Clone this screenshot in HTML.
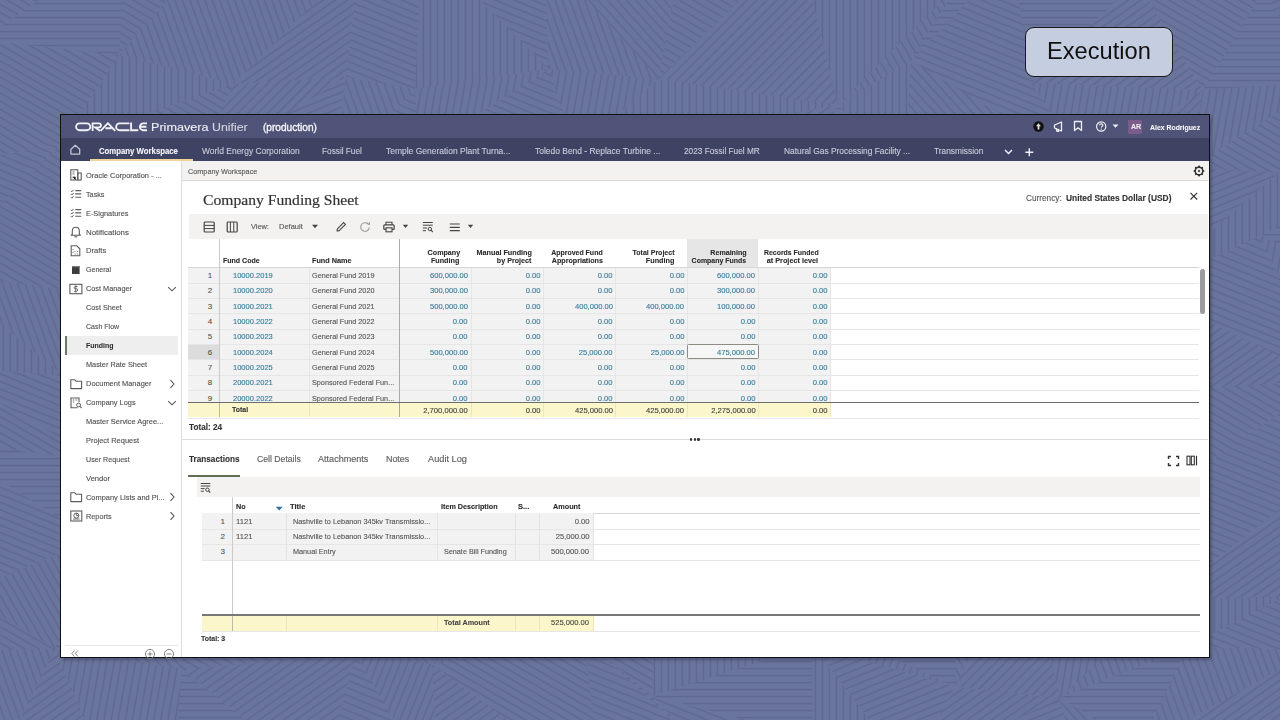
<!DOCTYPE html>
<html><head><meta charset="utf-8"><title>Company Funding Sheet</title>
<style>
html,body{margin:0;padding:0;width:1280px;height:720px;overflow:hidden;background:#5f6991;}
.a{position:absolute;display:block;}
.t{position:absolute;white-space:nowrap;font-family:"Liberation Sans",sans-serif;-webkit-text-stroke:0.12px currentColor;}
#root{position:relative;width:1280px;height:720px;overflow:hidden;}
</style></head><body><div id="root">
<div class="a" style="left:0px;top:0px;width:1280px;height:720px;background:#68729a;"></div>
<svg class="a" style="left:0;top:0" width="1280" height="720"><defs><pattern id="bp0" patternUnits="userSpaceOnUse" width="7" height="7" patternTransform="rotate(0)"><rect width="7" height="7" fill="#6b759d"/><rect x="0" y="2.8" width="7" height="1.6" fill="#5e6891"/></pattern><pattern id="bp1" patternUnits="userSpaceOnUse" width="7" height="7" patternTransform="rotate(22)"><rect width="7" height="7" fill="#6b759d"/><rect x="0" y="2.8" width="7" height="1.6" fill="#5e6891"/></pattern><pattern id="bp2" patternUnits="userSpaceOnUse" width="7" height="7" patternTransform="rotate(48)"><rect width="7" height="7" fill="#6b759d"/><rect x="0" y="2.8" width="7" height="1.6" fill="#5e6891"/></pattern><pattern id="bp3" patternUnits="userSpaceOnUse" width="7" height="7" patternTransform="rotate(70)"><rect width="7" height="7" fill="#6b759d"/><rect x="0" y="2.8" width="7" height="1.6" fill="#5e6891"/></pattern><pattern id="bp4" patternUnits="userSpaceOnUse" width="7" height="7" patternTransform="rotate(90)"><rect width="7" height="7" fill="#6b759d"/><rect x="0" y="2.8" width="7" height="1.6" fill="#5e6891"/></pattern><pattern id="bp5" patternUnits="userSpaceOnUse" width="7" height="7" patternTransform="rotate(112)"><rect width="7" height="7" fill="#6b759d"/><rect x="0" y="2.8" width="7" height="1.6" fill="#5e6891"/></pattern><pattern id="bp6" patternUnits="userSpaceOnUse" width="7" height="7" patternTransform="rotate(135)"><rect width="7" height="7" fill="#6b759d"/><rect x="0" y="2.8" width="7" height="1.6" fill="#5e6891"/></pattern><pattern id="bp7" patternUnits="userSpaceOnUse" width="7" height="7" patternTransform="rotate(158)"><rect width="7" height="7" fill="#6b759d"/><rect x="0" y="2.8" width="7" height="1.6" fill="#5e6891"/></pattern><pattern id="bp8" patternUnits="userSpaceOnUse" width="7" height="7" patternTransform="rotate(30)"><rect width="7" height="7" fill="#6b759d"/><rect x="0" y="2.8" width="7" height="1.6" fill="#5e6891"/></pattern><pattern id="bp9" patternUnits="userSpaceOnUse" width="7" height="7" patternTransform="rotate(60)"><rect width="7" height="7" fill="#6b759d"/><rect x="0" y="2.8" width="7" height="1.6" fill="#5e6891"/></pattern><pattern id="bp10" patternUnits="userSpaceOnUse" width="7" height="7" patternTransform="rotate(100)"><rect width="7" height="7" fill="#6b759d"/><rect x="0" y="2.8" width="7" height="1.6" fill="#5e6891"/></pattern><pattern id="bp11" patternUnits="userSpaceOnUse" width="7" height="7" patternTransform="rotate(145)"><rect width="7" height="7" fill="#6b759d"/><rect x="0" y="2.8" width="7" height="1.6" fill="#5e6891"/></pattern><filter id="bgb" x="0" y="0" width="1" height="1"><feGaussianBlur stdDeviation="0.45"/></filter></defs><g filter="url(#bgb)"><polygon points="-44,-54 128,-62 -18,40" fill="url(#bp8)"/><polygon points="128,-62 119,55 -18,40" fill="url(#bp0)"/><polygon points="-18,40 119,55 62,143" fill="url(#bp8)"/><polygon points="-18,40 62,143 -27,161" fill="url(#bp8)"/><polygon points="-27,161 62,143 -65,271" fill="url(#bp1)"/><polygon points="62,143 75,292 -65,271" fill="url(#bp8)"/><polygon points="-65,271 75,292 64,376" fill="url(#bp3)"/><polygon points="-65,271 64,376 -67,365" fill="url(#bp4)"/><polygon points="-67,365 64,376 101,461" fill="url(#bp1)"/><polygon points="-67,365 101,461 -64,441" fill="url(#bp8)"/><polygon points="-64,441 101,461 94,539" fill="url(#bp0)"/><polygon points="-64,441 94,539 -36,593" fill="url(#bp1)"/><polygon points="-36,593 94,539 55,649" fill="url(#bp9)"/><polygon points="-36,593 55,649 -60,651" fill="url(#bp8)"/><polygon points="-60,651 55,649 -20,801" fill="url(#bp3)"/><polygon points="55,649 104,765 -20,801" fill="url(#bp11)"/><polygon points="-20,801 104,765 75,876" fill="url(#bp8)"/><polygon points="-20,801 75,876 -24,863" fill="url(#bp8)"/><polygon points="128,-62 206,-44 119,55" fill="url(#bp8)"/><polygon points="206,-44 234,84 119,55" fill="url(#bp3)"/><polygon points="119,55 234,84 62,143" fill="url(#bp4)"/><polygon points="234,84 190,175 62,143" fill="url(#bp8)"/><polygon points="62,143 190,175 75,292" fill="url(#bp3)"/><polygon points="190,175 212,296 75,292" fill="url(#bp7)"/><polygon points="75,292 212,296 228,355" fill="url(#bp1)"/><polygon points="75,292 228,355 64,376" fill="url(#bp6)"/><polygon points="64,376 228,355 248,443" fill="url(#bp1)"/><polygon points="64,376 248,443 101,461" fill="url(#bp10)"/><polygon points="101,461 248,443 203,588" fill="url(#bp1)"/><polygon points="101,461 203,588 94,539" fill="url(#bp3)"/><polygon points="94,539 203,588 55,649" fill="url(#bp1)"/><polygon points="203,588 182,669 55,649" fill="url(#bp2)"/><polygon points="55,649 182,669 104,765" fill="url(#bp10)"/><polygon points="182,669 173,782 104,765" fill="url(#bp10)"/><polygon points="104,765 173,782 231,875" fill="url(#bp4)"/><polygon points="104,765 231,875 75,876" fill="url(#bp2)"/><polygon points="206,-44 360,-43 234,84" fill="url(#bp3)"/><polygon points="360,-43 346,77 234,84" fill="url(#bp11)"/><polygon points="234,84 346,77 190,175" fill="url(#bp6)"/><polygon points="346,77 336,167 190,175" fill="url(#bp7)"/><polygon points="190,175 336,167 357,301" fill="url(#bp10)"/><polygon points="190,175 357,301 212,296" fill="url(#bp3)"/><polygon points="212,296 357,301 328,381" fill="url(#bp6)"/><polygon points="212,296 328,381 228,355" fill="url(#bp8)"/><polygon points="228,355 328,381 295,484" fill="url(#bp6)"/><polygon points="228,355 295,484 248,443" fill="url(#bp3)"/><polygon points="248,443 295,484 342,605" fill="url(#bp1)"/><polygon points="248,443 342,605 203,588" fill="url(#bp11)"/><polygon points="203,588 342,605 356,655" fill="url(#bp5)"/><polygon points="203,588 356,655 182,669" fill="url(#bp8)"/><polygon points="182,669 356,655 321,782" fill="url(#bp11)"/><polygon points="182,669 321,782 173,782" fill="url(#bp0)"/><polygon points="173,782 321,782 292,867" fill="url(#bp8)"/><polygon points="173,782 292,867 231,875" fill="url(#bp9)"/><polygon points="360,-43 423,-57 415,89" fill="url(#bp1)"/><polygon points="360,-43 415,89 346,77" fill="url(#bp1)"/><polygon points="346,77 415,89 336,167" fill="url(#bp3)"/><polygon points="415,89 420,152 336,167" fill="url(#bp1)"/><polygon points="336,167 420,152 441,296" fill="url(#bp4)"/><polygon points="336,167 441,296 357,301" fill="url(#bp0)"/><polygon points="357,301 441,296 328,381" fill="url(#bp2)"/><polygon points="441,296 416,366 328,381" fill="url(#bp4)"/><polygon points="328,381 416,366 295,484" fill="url(#bp6)"/><polygon points="416,366 454,497 295,484" fill="url(#bp10)"/><polygon points="295,484 454,497 342,605" fill="url(#bp4)"/><polygon points="454,497 476,595 342,605" fill="url(#bp6)"/><polygon points="342,605 476,595 432,664" fill="url(#bp8)"/><polygon points="342,605 432,664 356,655" fill="url(#bp9)"/><polygon points="356,655 432,664 439,797" fill="url(#bp5)"/><polygon points="356,655 439,797 321,782" fill="url(#bp1)"/><polygon points="321,782 439,797 487,846" fill="url(#bp11)"/><polygon points="321,782 487,846 292,867" fill="url(#bp2)"/><polygon points="423,-57 544,-49 549,69" fill="url(#bp1)"/><polygon points="423,-57 549,69 415,89" fill="url(#bp4)"/><polygon points="415,89 549,69 420,152" fill="url(#bp10)"/><polygon points="549,69 577,153 420,152" fill="url(#bp1)"/><polygon points="420,152 577,153 441,296" fill="url(#bp1)"/><polygon points="577,153 530,264 441,296" fill="url(#bp9)"/><polygon points="441,296 530,264 416,366" fill="url(#bp1)"/><polygon points="530,264 560,375 416,366" fill="url(#bp4)"/><polygon points="416,366 560,375 454,497" fill="url(#bp7)"/><polygon points="560,375 606,483 454,497" fill="url(#bp0)"/><polygon points="454,497 606,483 571,578" fill="url(#bp8)"/><polygon points="454,497 571,578 476,595" fill="url(#bp6)"/><polygon points="476,595 571,578 432,664" fill="url(#bp4)"/><polygon points="571,578 584,639 432,664" fill="url(#bp9)"/><polygon points="432,664 584,639 602,790" fill="url(#bp8)"/><polygon points="432,664 602,790 439,797" fill="url(#bp11)"/><polygon points="439,797 602,790 600,891" fill="url(#bp1)"/><polygon points="439,797 600,891 487,846" fill="url(#bp2)"/><polygon points="544,-49 681,-37 658,79" fill="url(#bp2)"/><polygon points="544,-49 658,79 549,69" fill="url(#bp3)"/><polygon points="549,69 658,79 577,153" fill="url(#bp10)"/><polygon points="658,79 655,140 577,153" fill="url(#bp4)"/><polygon points="577,153 655,140 530,264" fill="url(#bp3)"/><polygon points="655,140 667,246 530,264" fill="url(#bp4)"/><polygon points="530,264 667,246 677,339" fill="url(#bp10)"/><polygon points="530,264 677,339 560,375" fill="url(#bp2)"/><polygon points="560,375 677,339 650,446" fill="url(#bp0)"/><polygon points="560,375 650,446 606,483" fill="url(#bp4)"/><polygon points="606,483 650,446 658,560" fill="url(#bp0)"/><polygon points="606,483 658,560 571,578" fill="url(#bp11)"/><polygon points="571,578 658,560 584,639" fill="url(#bp3)"/><polygon points="658,560 652,696 584,639" fill="url(#bp8)"/><polygon points="584,639 652,696 699,745" fill="url(#bp7)"/><polygon points="584,639 699,745 602,790" fill="url(#bp1)"/><polygon points="602,790 699,745 600,891" fill="url(#bp10)"/><polygon points="699,745 670,859 600,891" fill="url(#bp6)"/><polygon points="681,-37 799,-56 658,79" fill="url(#bp8)"/><polygon points="799,-56 838,105 658,79" fill="url(#bp6)"/><polygon points="658,79 838,105 655,140" fill="url(#bp4)"/><polygon points="838,105 807,169 655,140" fill="url(#bp11)"/><polygon points="655,140 807,169 777,242" fill="url(#bp3)"/><polygon points="655,140 777,242 667,246" fill="url(#bp5)"/><polygon points="667,246 777,242 797,354" fill="url(#bp11)"/><polygon points="667,246 797,354 677,339" fill="url(#bp11)"/><polygon points="677,339 797,354 650,446" fill="url(#bp6)"/><polygon points="797,354 836,446 650,446" fill="url(#bp5)"/><polygon points="650,446 836,446 658,560" fill="url(#bp2)"/><polygon points="836,446 772,602 658,560" fill="url(#bp0)"/><polygon points="658,560 772,602 812,645" fill="url(#bp11)"/><polygon points="658,560 812,645 652,696" fill="url(#bp4)"/><polygon points="652,696 812,645 813,737" fill="url(#bp0)"/><polygon points="652,696 813,737 699,745" fill="url(#bp1)"/><polygon points="699,745 813,737 670,859" fill="url(#bp6)"/><polygon points="813,737 812,903 670,859" fill="url(#bp8)"/><polygon points="799,-56 959,-16 838,105" fill="url(#bp4)"/><polygon points="959,-16 911,61 838,105" fill="url(#bp9)"/><polygon points="838,105 911,61 903,189" fill="url(#bp4)"/><polygon points="838,105 903,189 807,169" fill="url(#bp0)"/><polygon points="807,169 903,189 933,290" fill="url(#bp2)"/><polygon points="807,169 933,290 777,242" fill="url(#bp4)"/><polygon points="777,242 933,290 916,351" fill="url(#bp4)"/><polygon points="777,242 916,351 797,354" fill="url(#bp5)"/><polygon points="797,354 916,351 836,446" fill="url(#bp8)"/><polygon points="916,351 955,504 836,446" fill="url(#bp5)"/><polygon points="836,446 955,504 958,591" fill="url(#bp4)"/><polygon points="836,446 958,591 772,602" fill="url(#bp3)"/><polygon points="772,602 958,591 955,687" fill="url(#bp0)"/><polygon points="772,602 955,687 812,645" fill="url(#bp5)"/><polygon points="812,645 955,687 908,771" fill="url(#bp7)"/><polygon points="812,645 908,771 813,737" fill="url(#bp4)"/><polygon points="813,737 908,771 812,903" fill="url(#bp3)"/><polygon points="908,771 918,837 812,903" fill="url(#bp3)"/><polygon points="959,-16 1012,-45 911,61" fill="url(#bp0)"/><polygon points="1012,-45 1031,83 911,61" fill="url(#bp1)"/><polygon points="911,61 1031,83 1087,166" fill="url(#bp1)"/><polygon points="911,61 1087,166 903,189" fill="url(#bp2)"/><polygon points="903,189 1087,166 1085,304" fill="url(#bp0)"/><polygon points="903,189 1085,304 933,290" fill="url(#bp6)"/><polygon points="933,290 1085,304 1086,361" fill="url(#bp4)"/><polygon points="933,290 1086,361 916,351" fill="url(#bp10)"/><polygon points="916,351 1086,361 1028,451" fill="url(#bp9)"/><polygon points="916,351 1028,451 955,504" fill="url(#bp8)"/><polygon points="955,504 1028,451 958,591" fill="url(#bp2)"/><polygon points="1028,451 1026,549 958,591" fill="url(#bp10)"/><polygon points="958,591 1026,549 955,687" fill="url(#bp9)"/><polygon points="1026,549 1060,698 955,687" fill="url(#bp6)"/><polygon points="955,687 1060,698 908,771" fill="url(#bp11)"/><polygon points="1060,698 1077,769 908,771" fill="url(#bp7)"/><polygon points="908,771 1077,769 1062,891" fill="url(#bp11)"/><polygon points="908,771 1062,891 918,837" fill="url(#bp9)"/><polygon points="1012,-45 1137,-19 1031,83" fill="url(#bp0)"/><polygon points="1137,-19 1203,90 1031,83" fill="url(#bp11)"/><polygon points="1031,83 1203,90 1087,166" fill="url(#bp10)"/><polygon points="1203,90 1190,168 1087,166" fill="url(#bp6)"/><polygon points="1087,166 1190,168 1085,304" fill="url(#bp8)"/><polygon points="1190,168 1144,290 1085,304" fill="url(#bp2)"/><polygon points="1085,304 1144,290 1086,361" fill="url(#bp8)"/><polygon points="1144,290 1157,391 1086,361" fill="url(#bp9)"/><polygon points="1086,361 1157,391 1028,451" fill="url(#bp0)"/><polygon points="1157,391 1208,463 1028,451" fill="url(#bp10)"/><polygon points="1028,451 1208,463 1026,549" fill="url(#bp11)"/><polygon points="1208,463 1162,601 1026,549" fill="url(#bp10)"/><polygon points="1026,549 1162,601 1060,698" fill="url(#bp10)"/><polygon points="1162,601 1188,647 1060,698" fill="url(#bp3)"/><polygon points="1060,698 1188,647 1140,746" fill="url(#bp0)"/><polygon points="1060,698 1140,746 1077,769" fill="url(#bp2)"/><polygon points="1077,769 1140,746 1062,891" fill="url(#bp1)"/><polygon points="1140,746 1202,891 1062,891" fill="url(#bp6)"/><polygon points="1137,-19 1262,-7 1203,90" fill="url(#bp8)"/><polygon points="1262,-7 1328,81 1203,90" fill="url(#bp0)"/><polygon points="1203,90 1328,81 1190,168" fill="url(#bp10)"/><polygon points="1328,81 1278,173 1190,168" fill="url(#bp8)"/><polygon points="1190,168 1278,173 1144,290" fill="url(#bp7)"/><polygon points="1278,173 1260,236 1144,290" fill="url(#bp4)"/><polygon points="1144,290 1260,236 1328,380" fill="url(#bp1)"/><polygon points="1144,290 1328,380 1157,391" fill="url(#bp11)"/><polygon points="1157,391 1328,380 1208,463" fill="url(#bp8)"/><polygon points="1328,380 1292,500 1208,463" fill="url(#bp1)"/><polygon points="1208,463 1292,500 1162,601" fill="url(#bp1)"/><polygon points="1292,500 1285,596 1162,601" fill="url(#bp11)"/><polygon points="1162,601 1285,596 1188,647" fill="url(#bp4)"/><polygon points="1285,596 1316,650 1188,647" fill="url(#bp1)"/><polygon points="1188,647 1316,650 1140,746" fill="url(#bp3)"/><polygon points="1316,650 1270,756 1140,746" fill="url(#bp11)"/><polygon points="1140,746 1270,756 1202,891" fill="url(#bp3)"/><polygon points="1270,756 1269,876 1202,891" fill="url(#bp11)"/><polygon points="1262,-7 1391,-36 1328,81" fill="url(#bp7)"/><polygon points="1391,-36 1380,99 1328,81" fill="url(#bp7)"/><polygon points="1328,81 1380,99 1278,173" fill="url(#bp1)"/><polygon points="1380,99 1398,167 1278,173" fill="url(#bp7)"/><polygon points="1278,173 1398,167 1260,236" fill="url(#bp4)"/><polygon points="1398,167 1417,298 1260,236" fill="url(#bp0)"/><polygon points="1260,236 1417,298 1328,380" fill="url(#bp10)"/><polygon points="1417,298 1404,399 1328,380" fill="url(#bp3)"/><polygon points="1328,380 1404,399 1410,472" fill="url(#bp2)"/><polygon points="1328,380 1410,472 1292,500" fill="url(#bp5)"/><polygon points="1292,500 1410,472 1412,536" fill="url(#bp11)"/><polygon points="1292,500 1412,536 1285,596" fill="url(#bp11)"/><polygon points="1285,596 1412,536 1405,648" fill="url(#bp9)"/><polygon points="1285,596 1405,648 1316,650" fill="url(#bp2)"/><polygon points="1316,650 1405,648 1370,791" fill="url(#bp0)"/><polygon points="1316,650 1370,791 1270,756" fill="url(#bp7)"/><polygon points="1270,756 1370,791 1384,868" fill="url(#bp10)"/><polygon points="1270,756 1384,868 1269,876" fill="url(#bp1)"/></g></svg>
<div class="a" style="left:1025px;top:27.2px;width:148px;height:49.5px;background:#c5cde0;border:1.5px solid #1a1a1a;border-radius:9px;box-sizing:border-box;"></div>
<div class="t" id="exec" style="top:39.61px;font-size:23.5px;line-height:23.5px;color:#111;font-weight:400;font-family:'Liberation Sans', sans-serif;left:1047px;transform-origin:0 50%;transform:scaleX(1.0058);-webkit-text-stroke:0;">Execution</div>
<div class="a" style="left:60px;top:114px;width:1150px;height:544px;background:#111;box-shadow:1.5px 2px 3px rgba(20,25,50,0.35);"></div>
<div class="a" style="left:61px;top:115px;width:1148px;height:542px;background:#ffffff;"></div>
<div class="a" style="left:61px;top:115px;width:1148px;height:23px;background:#4f5478;"></div>
<div class="a" style="left:61px;top:138px;width:1148px;height:23px;background:#3e4364;"></div>
<svg class="a" style="left:75px;top:122px;" width="74" height="10" viewBox="0 0 74 10"><g fill="none" stroke="#f2f2f6" stroke-width="1.85"><rect x="1.1" y="1.3" width="14.2" height="6.9" rx="3.45"/><path d="M17.6 8.9 V1.3 H24 C26.6 1.3 26.6 5.3 24 5.3 H20.2 L25.2 8.9"/><path d="M25.6 8.9 L32.9 1.2 L40.2 8.9 M30.5 6.2 H36.5"/><path d="M54.4 1.3 H44.6 A3.45 3.45 0 0 0 44.6 8.2 H54.4"/><path d="M56.1 0.6 V8.2 H63.3"/><path d="M72 1.3 H68.3 A3.45 3.45 0 0 0 68.3 8.2 H72 M65.6 4.75 H71.4"/></g></svg>
<div class="t" id="prim" style="top:121.77px;font-size:11.02px;line-height:11.02px;color:#eceef4;font-weight:400;font-family:'Liberation Sans', sans-serif;left:150.9px;transform-origin:0 50%;transform:scaleX(1.1460);">Primavera</div>
<div class="t" id="unif" style="top:121.77px;font-size:11.02px;line-height:11.02px;color:#d0d3de;font-weight:400;font-family:'Liberation Sans', sans-serif;left:211.9px;transform-origin:0 50%;transform:scaleX(1.1219);">Unifier</div>
<div class="t" id="prod" style="top:122.88px;font-size:10.18px;line-height:10.18px;color:#f4f4f8;font-weight:400;font-family:'Liberation Sans', sans-serif;left:262.7px;transform-origin:0 50%;transform:scaleX(0.9926);-webkit-text-stroke:0.35px #f4f4f8;">(production)</div>
<svg class="a" style="left:1032px;top:120px;" width="13" height="13" viewBox="0 0 13 13"><circle cx="6.5" cy="6.5" r="5.2" fill="#111"/><path d="M6.5 3.3 L9 6.2 H7.4 V9.6 H5.6 V6.2 H4 Z" fill="#ddd"/></svg>
<svg class="a" style="left:1052px;top:120px;" width="14" height="13" viewBox="0 0 14 13"><path d="M2.5 5 L9.5 2 V11 L2.5 8 Z" fill="none" stroke="#f0f0f4" stroke-width="1.3" stroke-linejoin="round"/><path d="M4 8.3 L5 11.3 H6.6 L6 8.8" fill="none" stroke="#f0f0f4" stroke-width="1.2"/></svg>
<svg class="a" style="left:1072px;top:120px;" width="12" height="12" viewBox="0 0 12 12"><path d="M2.5 1.5 H9.5 V10.5 L6 7.8 L2.5 10.5 Z" fill="none" stroke="#f0f0f4" stroke-width="1.3" stroke-linejoin="round"/></svg>
<svg class="a" style="left:1095px;top:120px;" width="13" height="13" viewBox="0 0 13 13"><circle cx="6.2" cy="6.5" r="4.6" fill="none" stroke="#f0f0f4" stroke-width="1.2"/><path d="M4.6 5.3 C4.6 3.4 7.9 3.4 7.9 5.2 C7.9 6.3 6.3 6.4 6.3 7.6" fill="none" stroke="#f0f0f4" stroke-width="1.1"/><circle cx="6.3" cy="9.1" r="0.7" fill="#f0f0f4"/></svg>
<svg class="a" style="left:1111px;top:123px;" width="9" height="6" viewBox="0 0 9 6"><path d="M1.5 1.5 H7.5 L4.5 4.8 Z" fill="#f0f0f4"/></svg>
<div class="a" style="left:1127.8px;top:120.2px;width:14.5px;height:13.6px;background:#7a5d8b;border-radius:1px;"></div>
<div class="t" id="ar" style="top:124.24px;font-size:6.57px;line-height:6.57px;color:#eee8f0;font-weight:700;font-family:'Liberation Sans', sans-serif;left:1130.6px;transform-origin:0 50%;transform:scaleX(1.0667);">AR</div>
<div class="t" id="alex" style="top:123.68px;font-size:8.06px;line-height:8.06px;color:#f4f4f8;font-weight:700;font-family:'Liberation Sans', sans-serif;left:1149.8px;transform-origin:0 50%;transform:scaleX(0.8559);">Alex Rodriguez</div>
<svg class="a" style="left:69px;top:144px;" width="13" height="12" viewBox="0 0 13 12"><path d="M1.9 5.2 L6.3 1.3 L10.7 5.2 V10.1 H1.9 Z" fill="none" stroke="#c3c6d4" stroke-width="1.25" stroke-linejoin="round"/></svg>
<div class="t" id="nav0" style="top:146.60px;font-size:9.33px;line-height:9.33px;color:#f4f4f8;font-weight:700;font-family:'Liberation Sans', sans-serif;left:98.8px;transform-origin:0 50%;transform:scaleX(0.8337);">Company Workspace</div>
<div class="a" style="left:90.3px;top:159.3px;width:102.5px;height:2px;background:#f0d49a;"></div>
<div class="t" id="nav1" style="top:146.60px;font-size:9.33px;line-height:9.33px;color:#c9ccd9;font-weight:400;font-family:'Liberation Sans', sans-serif;left:201.6px;transform-origin:0 50%;transform:scaleX(0.9074);">World Energy Corporation</div>
<div class="t" id="nav2" style="top:146.60px;font-size:9.33px;line-height:9.33px;color:#c9ccd9;font-weight:400;font-family:'Liberation Sans', sans-serif;left:322.2px;transform-origin:0 50%;transform:scaleX(0.8844);">Fossil Fuel</div>
<div class="t" id="nav3" style="top:146.60px;font-size:9.33px;line-height:9.33px;color:#c9ccd9;font-weight:400;font-family:'Liberation Sans', sans-serif;left:386.0px;transform-origin:0 50%;transform:scaleX(0.9088);">Temple Generation Plant Turna...</div>
<div class="t" id="nav4" style="top:146.60px;font-size:9.33px;line-height:9.33px;color:#c9ccd9;font-weight:400;font-family:'Liberation Sans', sans-serif;left:535.0px;transform-origin:0 50%;transform:scaleX(0.9058);">Toledo Bend - Replace Turbine ...</div>
<div class="t" id="nav5" style="top:146.60px;font-size:9.33px;line-height:9.33px;color:#c9ccd9;font-weight:400;font-family:'Liberation Sans', sans-serif;left:684.4px;transform-origin:0 50%;transform:scaleX(0.8860);">2023 Fossil Fuel MR</div>
<div class="t" id="nav6" style="top:146.60px;font-size:9.33px;line-height:9.33px;color:#c9ccd9;font-weight:400;font-family:'Liberation Sans', sans-serif;left:783.5px;transform-origin:0 50%;transform:scaleX(0.8972);">Natural Gas Processing Facility ...</div>
<div class="t" id="nav7" style="top:146.60px;font-size:9.33px;line-height:9.33px;color:#c9ccd9;font-weight:400;font-family:'Liberation Sans', sans-serif;left:933.8px;transform-origin:0 50%;transform:scaleX(0.8945);">Transmission</div>
<svg class="a" style="left:1003px;top:148px;" width="11" height="8" viewBox="0 0 11 8"><path d="M2 2 L5.5 5.5 L9 2" fill="none" stroke="#eef0f6" stroke-width="1.5"/></svg>
<svg class="a" style="left:1024px;top:146.5px;" width="11" height="11" viewBox="0 0 11 11"><path d="M5.3 1.3 V9.3 M1.3 5.3 H9.3" stroke="#eef0f6" stroke-width="1.4"/></svg>
<div class="a" style="left:181.2px;top:161px;width:1px;height:495.5px;background:#dedede;"></div>
<div class="a" style="left:67.4px;top:336.3px;width:110.7px;height:18.5px;background:#eeeeee;"></div>
<div class="a" style="left:65.4px;top:336.3px;width:2px;height:18.5px;background:#6a7863;"></div>
<div class="t" id="side0" style="top:171.77px;font-size:7.95px;line-height:7.95px;color:#505050;font-weight:400;font-family:'Liberation Sans', sans-serif;left:86.3px;transform-origin:0 50%;transform:scaleX(0.9395);">Oracle Corporation - ...</div>
<svg class="a" style="left:69.8px;top:169.4px;" width="12" height="12" viewBox="0 0 12 12"><rect x="0.8" y="0.8" width="7" height="10.2" fill="none" stroke="#5c5c5c" stroke-width="1.1"/><rect x="7.8" y="4" width="3.4" height="7" fill="none" stroke="#5c5c5c" stroke-width="1.1"/><path d="M2.5 3 H4.5 M2.5 5 H4.5 M2.5 8 H5.5 V11" stroke="#5c5c5c" stroke-width="0.9"/></svg>
<div class="t" id="side1" style="top:190.70px;font-size:7.95px;line-height:7.95px;color:#505050;font-weight:400;font-family:'Liberation Sans', sans-serif;left:86.3px;transform-origin:0 50%;transform:scaleX(0.9100);">Tasks</div>
<svg class="a" style="left:69.8px;top:189.33px;" width="12" height="10" viewBox="0 0 12 10"><path d="M0.8 1.8 L1.8 2.8 L3.6 0.8 M0.8 5 L1.8 6 L3.6 4 M0.8 8.2 L1.8 9.2 L3.6 7.2" fill="none" stroke="#5c5c5c" stroke-width="1"/><path d="M5.3 1.6 H11.2 M5.3 4.9 H11.2 M5.3 8.2 H11.2" stroke="#5c5c5c" stroke-width="1.1"/></svg>
<div class="t" id="side2" style="top:209.63px;font-size:7.95px;line-height:7.95px;color:#505050;font-weight:400;font-family:'Liberation Sans', sans-serif;left:86.3px;transform-origin:0 50%;transform:scaleX(0.9261);">E-Signatures</div>
<svg class="a" style="left:69.8px;top:208.26000000000002px;" width="12" height="10" viewBox="0 0 12 10"><path d="M0.8 1.8 L1.8 2.8 L3.6 0.8 M0.8 5 L1.8 6 L3.6 4 M0.8 8.2 L1.8 9.2 L3.6 7.2" fill="none" stroke="#5c5c5c" stroke-width="1"/><path d="M5.3 1.6 H11.2 M5.3 4.9 H11.2 M5.3 8.2 H11.2" stroke="#5c5c5c" stroke-width="1.1"/></svg>
<div class="t" id="side3" style="top:228.56px;font-size:7.95px;line-height:7.95px;color:#505050;font-weight:400;font-family:'Liberation Sans', sans-serif;left:86.3px;transform-origin:0 50%;transform:scaleX(0.9930);">Notifications</div>
<svg class="a" style="left:69.8px;top:226.19px;" width="12" height="12" viewBox="0 0 12 12"><path d="M2.3 8.3 V5 C2.3 2.5 3.8 1.2 5.8 1.2 C7.8 1.2 9.3 2.5 9.3 5 V8.3 L10.4 9.2 H1.2 Z" fill="none" stroke="#5c5c5c" stroke-width="1.1" stroke-linejoin="round"/><path d="M4.3 10.8 H7.3" stroke="#5c5c5c" stroke-width="1.1"/></svg>
<div class="t" id="side4" style="top:247.49px;font-size:7.95px;line-height:7.95px;color:#505050;font-weight:400;font-family:'Liberation Sans', sans-serif;left:86.3px;transform-origin:0 50%;transform:scaleX(0.9524);">Drafts</div>
<svg class="a" style="left:69.8px;top:245.12px;" width="12" height="12" viewBox="0 0 12 12"><path d="M1.2 0.8 H6.8 L9.8 3.8 V10.8 H1.2 Z" fill="none" stroke="#5c5c5c" stroke-width="1.1"/><path d="M3 4 V5 M3 7 V8 M5 6 V7 M5 8.5 V9.5 M7.5 6 V7 M7.5 8.5 V9.5" stroke="#5c5c5c" stroke-width="0.8"/></svg>
<div class="t" id="side5" style="top:266.42px;font-size:7.95px;line-height:7.95px;color:#505050;font-weight:400;font-family:'Liberation Sans', sans-serif;left:86.3px;transform-origin:0 50%;transform:scaleX(0.8893);">General</div>
<svg class="a" style="left:69.8px;top:264.04999999999995px;" width="12" height="12" viewBox="0 0 12 12"><rect x="2" y="2" width="7.6" height="8" fill="#3c3c3c"/><rect x="2" y="2" width="7.6" height="1.3" fill="#777"/></svg>
<div class="t" id="side6" style="top:285.35px;font-size:7.95px;line-height:7.95px;color:#505050;font-weight:400;font-family:'Liberation Sans', sans-serif;left:86.3px;transform-origin:0 50%;transform:scaleX(0.9220);">Cost Manager</div>
<svg class="a" style="left:68.8px;top:282.97999999999996px;" width="14" height="12" viewBox="0 0 14 12"><rect x="0.9" y="1.3" width="12" height="9.4" fill="none" stroke="#5c5c5c" stroke-width="1.1"/><path d="M8.6 3.5 H6 C4.8 3.5 4.8 5.7 6 5.7 H7.6 C8.9 5.7 8.9 8.3 7.6 8.3 H5 M6.8 2.3 V9.6" fill="none" stroke="#5c5c5c" stroke-width="0.9"/></svg>
<svg class="a" style="left:167px;top:284.97999999999996px;" width="10" height="8" viewBox="0 0 10 8"><path d="M1.2 2.2 L5 5.8 L8.8 2.2" fill="none" stroke="#555" stroke-width="1.1"/></svg>
<div class="t" id="side7" style="top:304.28px;font-size:7.95px;line-height:7.95px;color:#505050;font-weight:400;font-family:'Liberation Sans', sans-serif;left:86.3px;transform-origin:0 50%;transform:scaleX(0.9128);">Cost Sheet</div>
<div class="t" id="side8" style="top:323.21px;font-size:7.95px;line-height:7.95px;color:#505050;font-weight:400;font-family:'Liberation Sans', sans-serif;left:86.3px;transform-origin:0 50%;transform:scaleX(0.8842);">Cash Flow</div>
<div class="t" id="side9" style="top:342.14px;font-size:7.95px;line-height:7.95px;color:#333;font-weight:700;font-family:'Liberation Sans', sans-serif;left:86.3px;transform-origin:0 50%;transform:scaleX(0.8774);">Funding</div>
<div class="t" id="side10" style="top:361.07px;font-size:7.95px;line-height:7.95px;color:#505050;font-weight:400;font-family:'Liberation Sans', sans-serif;left:86.3px;transform-origin:0 50%;transform:scaleX(0.9227);">Master Rate Sheet</div>
<div class="t" id="side11" style="top:380.00px;font-size:7.95px;line-height:7.95px;color:#505050;font-weight:400;font-family:'Liberation Sans', sans-serif;left:86.3px;transform-origin:0 50%;transform:scaleX(0.9386);">Document Manager</div>
<svg class="a" style="left:69.8px;top:377.63px;" width="13" height="12" viewBox="0 0 13 12"><path d="M0.8 1.8 H4.8 L6 3.2 H11.6 V10.6 H0.8 Z" fill="none" stroke="#5c5c5c" stroke-width="1.1" stroke-linejoin="round"/></svg>
<svg class="a" style="left:168px;top:378.63px;" width="8" height="10" viewBox="0 0 8 10"><path d="M2.5 1.2 L6 5 L2.5 8.8" fill="none" stroke="#555" stroke-width="1.1"/></svg>
<div class="t" id="side12" style="top:398.93px;font-size:7.95px;line-height:7.95px;color:#505050;font-weight:400;font-family:'Liberation Sans', sans-serif;left:86.3px;transform-origin:0 50%;transform:scaleX(0.9283);">Company Logs</div>
<svg class="a" style="left:69.8px;top:396.55999999999995px;" width="13" height="12" viewBox="0 0 13 12"><path d="M7.5 10.8 H1 V1 H9 V5" fill="none" stroke="#5c5c5c" stroke-width="1.1"/><path d="M2.8 3 H4.2 M2.8 5 H4.2 M5.5 3 H7.2" stroke="#5c5c5c" stroke-width="0.9"/><circle cx="8.6" cy="8" r="1.9" fill="none" stroke="#5c5c5c" stroke-width="1"/><path d="M10 9.4 L11.6 11" stroke="#5c5c5c" stroke-width="1.1"/></svg>
<svg class="a" style="left:167px;top:398.55999999999995px;" width="10" height="8" viewBox="0 0 10 8"><path d="M1.2 2.2 L5 5.8 L8.8 2.2" fill="none" stroke="#555" stroke-width="1.1"/></svg>
<div class="t" id="side13" style="top:417.86px;font-size:7.95px;line-height:7.95px;color:#505050;font-weight:400;font-family:'Liberation Sans', sans-serif;left:86.3px;transform-origin:0 50%;transform:scaleX(0.9373);">Master Service Agree...</div>
<div class="t" id="side14" style="top:436.79px;font-size:7.95px;line-height:7.95px;color:#505050;font-weight:400;font-family:'Liberation Sans', sans-serif;left:86.3px;transform-origin:0 50%;transform:scaleX(0.9375);">Project Request</div>
<div class="t" id="side15" style="top:455.72px;font-size:7.95px;line-height:7.95px;color:#505050;font-weight:400;font-family:'Liberation Sans', sans-serif;left:86.3px;transform-origin:0 50%;transform:scaleX(0.9000);">User Request</div>
<div class="t" id="side16" style="top:474.65px;font-size:7.95px;line-height:7.95px;color:#505050;font-weight:400;font-family:'Liberation Sans', sans-serif;left:86.3px;transform-origin:0 50%;transform:scaleX(0.9560);">Vendor</div>
<div class="t" id="side17" style="top:493.58px;font-size:7.95px;line-height:7.95px;color:#505050;font-weight:400;font-family:'Liberation Sans', sans-serif;left:86.3px;transform-origin:0 50%;transform:scaleX(0.9369);">Company Lists and Pi...</div>
<svg class="a" style="left:69.8px;top:491.21px;" width="13" height="12" viewBox="0 0 13 12"><path d="M0.8 1.8 H4.8 L6 3.2 H11.6 V10.6 H0.8 Z" fill="none" stroke="#5c5c5c" stroke-width="1.1" stroke-linejoin="round"/></svg>
<svg class="a" style="left:168px;top:492.21px;" width="8" height="10" viewBox="0 0 8 10"><path d="M2.5 1.2 L6 5 L2.5 8.8" fill="none" stroke="#555" stroke-width="1.1"/></svg>
<div class="t" id="side18" style="top:512.51px;font-size:7.95px;line-height:7.95px;color:#505050;font-weight:400;font-family:'Liberation Sans', sans-serif;left:86.3px;transform-origin:0 50%;transform:scaleX(0.9214);">Reports</div>
<svg class="a" style="left:69.8px;top:510.14px;" width="13" height="12" viewBox="0 0 13 12"><rect x="0.8" y="1" width="11" height="10" fill="none" stroke="#5c5c5c" stroke-width="1.1"/><circle cx="6.3" cy="5.6" r="2.5" fill="none" stroke="#5c5c5c" stroke-width="1"/><path d="M6.3 3.1 V5.6 H8.8" fill="none" stroke="#5c5c5c" stroke-width="0.9"/><path d="M3 9 H9.6" stroke="#5c5c5c" stroke-width="0.9"/></svg>
<svg class="a" style="left:168px;top:511.14px;" width="8" height="10" viewBox="0 0 8 10"><path d="M2.5 1.2 L6 5 L2.5 8.8" fill="none" stroke="#555" stroke-width="1.1"/></svg>
<div class="a" style="left:65px;top:645.3px;width:113px;height:1px;background:#e6e6e6;"></div>
<svg class="a" style="left:70px;top:649px;" width="10" height="9" viewBox="0 0 10 9"><path d="M4.5 1.5 L1.8 4.5 L4.5 7.5 M8 1.5 L5.3 4.5 L8 7.5" fill="none" stroke="#777" stroke-width="0.9"/></svg>
<svg class="a" style="left:144px;top:648px;" width="12" height="12" viewBox="0 0 12 12"><circle cx="6" cy="6" r="4.6" fill="none" stroke="#777" stroke-width="0.9"/><path d="M6 3.5 V8.5 M3.5 6 H8.5" stroke="#777" stroke-width="0.9"/></svg>
<svg class="a" style="left:163px;top:648px;" width="12" height="12" viewBox="0 0 12 12"><circle cx="6" cy="6" r="4.6" fill="none" stroke="#777" stroke-width="0.9"/><path d="M3.5 6 H8.5" stroke="#777" stroke-width="0.9"/></svg>
<div class="a" style="left:181.7px;top:161px;width:1027px;height:19.5px;background:#f3f2f0;"></div>
<div class="a" style="left:181.7px;top:180.3px;width:1026.8px;height:1px;background:#d9d9d9;"></div>
<div class="t" id="crumb" style="top:167.86px;font-size:7.84px;line-height:7.84px;color:#555;font-weight:400;font-family:'Liberation Sans', sans-serif;left:187.7px;transform-origin:0 50%;transform:scaleX(0.9280);">Company Workspace</div>
<svg class="a" style="left:1192px;top:164.1px;" width="14" height="14" viewBox="0 0 14 14"><circle cx="7" cy="7" r="3.8" fill="none" stroke="#333" stroke-width="1.45"/><circle cx="11.40" cy="7.00" r="1.05" fill="#333"/><circle cx="10.11" cy="10.11" r="1.05" fill="#333"/><circle cx="7.00" cy="11.40" r="1.05" fill="#333"/><circle cx="3.89" cy="10.11" r="1.05" fill="#333"/><circle cx="2.60" cy="7.00" r="1.05" fill="#333"/><circle cx="3.89" cy="3.89" r="1.05" fill="#333"/><circle cx="7.00" cy="2.60" r="1.05" fill="#333"/><circle cx="10.11" cy="3.89" r="1.05" fill="#333"/><circle cx="7" cy="7" r="1.2" fill="#555"/></svg>
<div class="t" id="title" style="top:191.84px;font-size:15.6px;line-height:15.6px;color:#333;font-weight:400;font-family:'Liberation Serif', serif;left:203.0px;transform-origin:0 50%;transform:scaleX(1.0032);-webkit-text-stroke:0.2px #333;">Company Funding Sheet</div>
<div class="t" id="cur0" style="top:194.05px;font-size:8.8px;line-height:8.8px;color:#555;font-weight:400;font-family:'Liberation Sans', sans-serif;left:1026px;transform-origin:0 50%;transform:scaleX(0.9368);">Currency:</div>
<div class="t" id="cur1" style="top:194.05px;font-size:8.8px;line-height:8.8px;color:#333;font-weight:700;font-family:'Liberation Sans', sans-serif;left:1066px;transform-origin:0 50%;transform:scaleX(0.9545);">United States Dollar (USD)</div>
<svg class="a" style="left:1189px;top:191px;" width="10" height="10" viewBox="0 0 10 10"><path d="M1.5 1.8 L8.2 8.5 M8.2 1.8 L1.5 8.5" stroke="#333" stroke-width="1.1"/></svg>
<div class="a" style="left:188.6px;top:213.8px;width:1019px;height:25px;background:#f3f2f0;"></div>
<svg class="a" style="left:203px;top:220.5px;" width="13" height="12" viewBox="0 0 13 12"><rect x="1.2" y="1" width="10" height="10" rx="1" fill="none" stroke="#444" stroke-width="1.2"/><path d="M1.2 4.4 H11.2 M1.2 7.6 H11.2" stroke="#444" stroke-width="1"/></svg>
<svg class="a" style="left:226px;top:220.5px;" width="13" height="12" viewBox="0 0 13 12"><rect x="1.2" y="1" width="10" height="10" rx="1" fill="none" stroke="#444" stroke-width="1.2"/><path d="M4.4 1 V11 M7.8 1 V11" stroke="#444" stroke-width="1"/></svg>
<div class="t" id="view" style="top:223.06px;font-size:7.84px;line-height:7.84px;color:#555;font-weight:400;font-family:'Liberation Sans', sans-serif;left:251.3px;transform-origin:0 50%;transform:scaleX(0.9421);">View:</div>
<div class="t" id="default" style="top:223.06px;font-size:7.84px;line-height:7.84px;color:#555;font-weight:400;font-family:'Liberation Sans', sans-serif;left:279px;transform-origin:0 50%;transform:scaleX(0.9600);">Default</div>
<svg class="a" style="left:311px;top:224px;" width="8" height="5" viewBox="0 0 8 5"><path d="M1 0.8 H7 L4 4.2 Z" fill="#444"/></svg>
<svg class="a" style="left:334.5px;top:221px;" width="13" height="12" viewBox="0 0 13 12"><path d="M2 10 L2.4 7.8 L8.6 1.6 L10.4 3.4 L4.2 9.6 Z" fill="none" stroke="#444" stroke-width="1.1" stroke-linejoin="round"/></svg>
<svg class="a" style="left:358.5px;top:221px;" width="12" height="12" viewBox="0 0 12 12"><path d="M9.6 3.6 A4.3 4.3 0 1 0 10.3 6.4" fill="none" stroke="#9a9a9a" stroke-width="1.1"/><path d="M8 1.6 L10.2 3.8 L10.6 1" fill="none" stroke="#9a9a9a" stroke-width="1"/></svg>
<svg class="a" style="left:383px;top:221px;" width="12" height="12" viewBox="0 0 12 12"><path d="M3 3.8 V1.2 H9 V3.8" fill="none" stroke="#444" stroke-width="1.1"/><rect x="0.8" y="3.8" width="10.4" height="4.6" rx="1" fill="none" stroke="#444" stroke-width="1.2"/><rect x="3" y="6.8" width="6" height="4" fill="#f1f0ee" stroke="#444" stroke-width="1.1"/></svg>
<svg class="a" style="left:401.5px;top:224px;" width="7" height="5" viewBox="0 0 7 5"><path d="M0.8 0.8 H6.2 L3.5 4 Z" fill="#444"/></svg>
<svg class="a" style="left:421.5px;top:221px;" width="12" height="12" viewBox="0 0 12 12"><path d="M0.8 1.5 H10.8 M0.8 4.2 H10.8 M0.8 7 H5 M0.8 9.7 H4" stroke="#444" stroke-width="1"/><circle cx="7.8" cy="8" r="1.7" fill="none" stroke="#444" stroke-width="1"/><path d="M9 9.2 L10.8 11" stroke="#444" stroke-width="1.1"/></svg>
<svg class="a" style="left:448.5px;top:221.5px;" width="12" height="11" viewBox="0 0 12 11"><path d="M0.8 2 H10.8 M0.8 5.3 H10.8 M0.8 8.6 H10.8" stroke="#444" stroke-width="1.2"/></svg>
<svg class="a" style="left:466.5px;top:224px;" width="7" height="5" viewBox="0 0 7 5"><path d="M0.8 0.8 H6.2 L3.5 4 Z" fill="#444"/></svg>
<div class="a" style="left:687.2px;top:239.3px;width:71.3px;height:28.2px;background:#e6e6e6;"></div>
<div class="a" style="left:188.4px;top:267.0px;width:1010.6px;height:1px;background:#d6d6d6;"></div>
<div class="a" style="left:188.4px;top:267.5px;width:642.4px;height:138.32999999999998px;background:#f2f2f2;"></div>
<div class="a" style="left:188.4px;top:344.35px;width:30.599999999999994px;height:15.37px;background:#dcdcdc;"></div>
<div class="a" style="left:188.4px;top:283px;width:1010.6px;height:1px;background:#e6e6e6;"></div>
<div class="a" style="left:188.4px;top:298px;width:1010.6px;height:1px;background:#e6e6e6;"></div>
<div class="a" style="left:188.4px;top:313px;width:1010.6px;height:1px;background:#e6e6e6;"></div>
<div class="a" style="left:188.4px;top:329px;width:1010.6px;height:1px;background:#e6e6e6;"></div>
<div class="a" style="left:188.4px;top:344px;width:1010.6px;height:1px;background:#e6e6e6;"></div>
<div class="a" style="left:188.4px;top:359px;width:1010.6px;height:1px;background:#e6e6e6;"></div>
<div class="a" style="left:188.4px;top:375px;width:1010.6px;height:1px;background:#e6e6e6;"></div>
<div class="a" style="left:188.4px;top:390px;width:1010.6px;height:1px;background:#e6e6e6;"></div>
<div class="a" style="left:308.8px;top:267.5px;width:1px;height:134.10000000000002px;background:#e6e6e6;"></div>
<div class="a" style="left:470.5px;top:267.5px;width:1px;height:134.10000000000002px;background:#e6e6e6;"></div>
<div class="a" style="left:543.3px;top:267.5px;width:1px;height:134.10000000000002px;background:#e6e6e6;"></div>
<div class="a" style="left:615.3px;top:267.5px;width:1px;height:134.10000000000002px;background:#e6e6e6;"></div>
<div class="a" style="left:686.7px;top:267.5px;width:1px;height:134.10000000000002px;background:#e6e6e6;"></div>
<div class="a" style="left:758.0px;top:267.5px;width:1px;height:134.10000000000002px;background:#e6e6e6;"></div>
<div class="a" style="left:830.3px;top:267.5px;width:1px;height:134.10000000000002px;background:#e6e6e6;"></div>
<div class="a" style="left:687.2px;top:344.2px;width:71.5px;height:15.1px;box-sizing:border-box;border:1px solid #8c8c84;border-radius:1.5px;background:#f6f6f6;"></div>
<div class="t" id="h_fc" style="top:256.77px;font-size:7.95px;line-height:7.95px;color:#2b2b2b;font-weight:700;font-family:'Liberation Sans', sans-serif;left:222.5px;transform-origin:0 50%;transform:scaleX(0.8841);">Fund Code</div>
<div class="t" id="h_fn" style="top:256.77px;font-size:7.95px;line-height:7.95px;color:#2b2b2b;font-weight:700;font-family:'Liberation Sans', sans-serif;left:312px;transform-origin:0 50%;transform:scaleX(0.9128);">Fund Name</div>
<div class="t" id="h0a" style="top:248.67px;font-size:7.95px;line-height:7.95px;color:#2b2b2b;font-weight:700;font-family:'Liberation Sans', sans-serif;right:820.3px;transform-origin:100% 50%;transform:scaleX(0.9000);">Company</div>
<div class="t" id="h0b" style="top:257.07px;font-size:7.95px;line-height:7.95px;color:#2b2b2b;font-weight:700;font-family:'Liberation Sans', sans-serif;right:820.3px;transform-origin:100% 50%;transform:scaleX(0.9065);">Funding</div>
<div class="t" id="h1a" style="top:248.67px;font-size:7.95px;line-height:7.95px;color:#2b2b2b;font-weight:700;font-family:'Liberation Sans', sans-serif;right:748.6px;transform-origin:100% 50%;transform:scaleX(0.9082);">Manual Funding</div>
<div class="t" id="h1b" style="top:257.07px;font-size:7.95px;line-height:7.95px;color:#2b2b2b;font-weight:700;font-family:'Liberation Sans', sans-serif;right:748.6px;transform-origin:100% 50%;transform:scaleX(0.9000);">by Project</div>
<div class="t" id="h2a" style="top:248.67px;font-size:7.95px;line-height:7.95px;color:#2b2b2b;font-weight:700;font-family:'Liberation Sans', sans-serif;right:677.1px;transform-origin:100% 50%;transform:scaleX(0.8780);">Approved Fund</div>
<div class="t" id="h2b" style="top:257.07px;font-size:7.95px;line-height:7.95px;color:#2b2b2b;font-weight:700;font-family:'Liberation Sans', sans-serif;right:677.1px;transform-origin:100% 50%;transform:scaleX(0.8982);">Appropriations</div>
<div class="t" id="h3a" style="top:248.67px;font-size:7.95px;line-height:7.95px;color:#2b2b2b;font-weight:700;font-family:'Liberation Sans', sans-serif;right:605.3px;transform-origin:100% 50%;transform:scaleX(0.8833);">Total Project</div>
<div class="t" id="h3b" style="top:257.07px;font-size:7.95px;line-height:7.95px;color:#2b2b2b;font-weight:700;font-family:'Liberation Sans', sans-serif;right:605.3px;transform-origin:100% 50%;transform:scaleX(0.9097);">Funding</div>
<div class="t" id="h4a" style="top:248.67px;font-size:7.95px;line-height:7.95px;color:#2b2b2b;font-weight:700;font-family:'Liberation Sans', sans-serif;right:533.7px;transform-origin:100% 50%;transform:scaleX(0.8927);">Remaining</div>
<div class="t" id="h4b" style="top:257.07px;font-size:7.95px;line-height:7.95px;color:#2b2b2b;font-weight:700;font-family:'Liberation Sans', sans-serif;right:533.7px;transform-origin:100% 50%;transform:scaleX(0.8774);">Company Funds</div>
<div class="t" id="h5a" style="top:248.67px;font-size:7.95px;line-height:7.95px;color:#2b2b2b;font-weight:700;font-family:'Liberation Sans', sans-serif;right:461.79999999999995px;transform-origin:100% 50%;transform:scaleX(0.8730);">Records Funded</div>
<div class="t" id="h5b" style="top:257.07px;font-size:7.95px;line-height:7.95px;color:#2b2b2b;font-weight:700;font-family:'Liberation Sans', sans-serif;right:461.79999999999995px;transform-origin:100% 50%;transform:scaleX(0.9143);">at Project level</div>
<div class="t" id="rn0" style="top:271.83px;font-size:8.0px;line-height:8.0px;color:#555;font-weight:400;font-family:'Liberation Sans', sans-serif;right:1067.7px;transform-origin:100% 50%;">1</div>
<div class="t" id="code0" style="top:271.83px;font-size:8.0px;line-height:8.0px;color:#367b9a;font-weight:400;font-family:'Liberation Sans', sans-serif;left:232.5px;transform-origin:0 50%;transform:scaleX(0.9405);">10000.2019</div>
<div class="t" id="name0" style="top:271.83px;font-size:8.0px;line-height:8.0px;color:#555;font-weight:400;font-family:'Liberation Sans', sans-serif;left:312.0px;transform-origin:0 50%;transform:scaleX(0.9058);">General Fund 2019</div>
<div class="t" id="v0_0" style="top:271.83px;font-size:8.0px;line-height:8.0px;color:#367b9a;font-weight:400;font-family:'Liberation Sans', sans-serif;right:812.0px;transform-origin:100% 50%;transform:scaleX(0.9525);">600,000.00</div>
<div class="t" id="v0_1" style="top:271.83px;font-size:8.0px;line-height:8.0px;color:#367b9a;font-weight:400;font-family:'Liberation Sans', sans-serif;right:739.2px;transform-origin:100% 50%;transform:scaleX(0.9525);">0.00</div>
<div class="t" id="v0_2" style="top:271.83px;font-size:8.0px;line-height:8.0px;color:#367b9a;font-weight:400;font-family:'Liberation Sans', sans-serif;right:667.2px;transform-origin:100% 50%;transform:scaleX(0.9525);">0.00</div>
<div class="t" id="v0_3" style="top:271.83px;font-size:8.0px;line-height:8.0px;color:#367b9a;font-weight:400;font-family:'Liberation Sans', sans-serif;right:595.8px;transform-origin:100% 50%;transform:scaleX(0.9525);">0.00</div>
<div class="t" id="v0_4" style="top:271.83px;font-size:8.0px;line-height:8.0px;color:#367b9a;font-weight:400;font-family:'Liberation Sans', sans-serif;right:524.5px;transform-origin:100% 50%;transform:scaleX(0.9525);">600,000.00</div>
<div class="t" id="v0_5" style="top:271.83px;font-size:8.0px;line-height:8.0px;color:#367b9a;font-weight:400;font-family:'Liberation Sans', sans-serif;right:452.20000000000005px;transform-origin:100% 50%;transform:scaleX(0.9525);">0.00</div>
<div class="t" id="rn1" style="top:287.20px;font-size:8.0px;line-height:8.0px;color:#555;font-weight:400;font-family:'Liberation Sans', sans-serif;right:1067.7px;transform-origin:100% 50%;">2</div>
<div class="t" id="code1" style="top:287.20px;font-size:8.0px;line-height:8.0px;color:#367b9a;font-weight:400;font-family:'Liberation Sans', sans-serif;left:232.5px;transform-origin:0 50%;transform:scaleX(0.9405);">10000.2020</div>
<div class="t" id="name1" style="top:287.20px;font-size:8.0px;line-height:8.0px;color:#555;font-weight:400;font-family:'Liberation Sans', sans-serif;left:312.0px;transform-origin:0 50%;transform:scaleX(0.9058);">General Fund 2020</div>
<div class="t" id="v1_0" style="top:287.20px;font-size:8.0px;line-height:8.0px;color:#367b9a;font-weight:400;font-family:'Liberation Sans', sans-serif;right:812.0px;transform-origin:100% 50%;transform:scaleX(0.9525);">300,000.00</div>
<div class="t" id="v1_1" style="top:287.20px;font-size:8.0px;line-height:8.0px;color:#367b9a;font-weight:400;font-family:'Liberation Sans', sans-serif;right:739.2px;transform-origin:100% 50%;transform:scaleX(0.9525);">0.00</div>
<div class="t" id="v1_2" style="top:287.20px;font-size:8.0px;line-height:8.0px;color:#367b9a;font-weight:400;font-family:'Liberation Sans', sans-serif;right:667.2px;transform-origin:100% 50%;transform:scaleX(0.9525);">0.00</div>
<div class="t" id="v1_3" style="top:287.20px;font-size:8.0px;line-height:8.0px;color:#367b9a;font-weight:400;font-family:'Liberation Sans', sans-serif;right:595.8px;transform-origin:100% 50%;transform:scaleX(0.9525);">0.00</div>
<div class="t" id="v1_4" style="top:287.20px;font-size:8.0px;line-height:8.0px;color:#367b9a;font-weight:400;font-family:'Liberation Sans', sans-serif;right:524.5px;transform-origin:100% 50%;transform:scaleX(0.9525);">300,000.00</div>
<div class="t" id="v1_5" style="top:287.20px;font-size:8.0px;line-height:8.0px;color:#367b9a;font-weight:400;font-family:'Liberation Sans', sans-serif;right:452.20000000000005px;transform-origin:100% 50%;transform:scaleX(0.9525);">0.00</div>
<div class="t" id="rn2" style="top:302.57px;font-size:8.0px;line-height:8.0px;color:#555;font-weight:400;font-family:'Liberation Sans', sans-serif;right:1067.7px;transform-origin:100% 50%;">3</div>
<div class="t" id="code2" style="top:302.57px;font-size:8.0px;line-height:8.0px;color:#367b9a;font-weight:400;font-family:'Liberation Sans', sans-serif;left:232.5px;transform-origin:0 50%;transform:scaleX(0.9405);">10000.2021</div>
<div class="t" id="name2" style="top:302.57px;font-size:8.0px;line-height:8.0px;color:#555;font-weight:400;font-family:'Liberation Sans', sans-serif;left:312.0px;transform-origin:0 50%;transform:scaleX(0.9058);">General Fund 2021</div>
<div class="t" id="v2_0" style="top:302.57px;font-size:8.0px;line-height:8.0px;color:#367b9a;font-weight:400;font-family:'Liberation Sans', sans-serif;right:812.0px;transform-origin:100% 50%;transform:scaleX(0.9525);">500,000.00</div>
<div class="t" id="v2_1" style="top:302.57px;font-size:8.0px;line-height:8.0px;color:#367b9a;font-weight:400;font-family:'Liberation Sans', sans-serif;right:739.2px;transform-origin:100% 50%;transform:scaleX(0.9525);">0.00</div>
<div class="t" id="v2_2" style="top:302.57px;font-size:8.0px;line-height:8.0px;color:#367b9a;font-weight:400;font-family:'Liberation Sans', sans-serif;right:667.2px;transform-origin:100% 50%;transform:scaleX(0.9525);">400,000.00</div>
<div class="t" id="v2_3" style="top:302.57px;font-size:8.0px;line-height:8.0px;color:#367b9a;font-weight:400;font-family:'Liberation Sans', sans-serif;right:595.8px;transform-origin:100% 50%;transform:scaleX(0.9525);">400,000.00</div>
<div class="t" id="v2_4" style="top:302.57px;font-size:8.0px;line-height:8.0px;color:#367b9a;font-weight:400;font-family:'Liberation Sans', sans-serif;right:524.5px;transform-origin:100% 50%;transform:scaleX(0.9525);">100,000.00</div>
<div class="t" id="v2_5" style="top:302.57px;font-size:8.0px;line-height:8.0px;color:#367b9a;font-weight:400;font-family:'Liberation Sans', sans-serif;right:452.20000000000005px;transform-origin:100% 50%;transform:scaleX(0.9525);">0.00</div>
<div class="t" id="rn3" style="top:317.94px;font-size:8.0px;line-height:8.0px;color:#555;font-weight:400;font-family:'Liberation Sans', sans-serif;right:1067.7px;transform-origin:100% 50%;">4</div>
<div class="t" id="code3" style="top:317.94px;font-size:8.0px;line-height:8.0px;color:#367b9a;font-weight:400;font-family:'Liberation Sans', sans-serif;left:232.5px;transform-origin:0 50%;transform:scaleX(0.9405);">10000.2022</div>
<div class="t" id="name3" style="top:317.94px;font-size:8.0px;line-height:8.0px;color:#555;font-weight:400;font-family:'Liberation Sans', sans-serif;left:312.0px;transform-origin:0 50%;transform:scaleX(0.9058);">General Fund 2022</div>
<div class="t" id="v3_0" style="top:317.94px;font-size:8.0px;line-height:8.0px;color:#367b9a;font-weight:400;font-family:'Liberation Sans', sans-serif;right:812.0px;transform-origin:100% 50%;transform:scaleX(0.9525);">0.00</div>
<div class="t" id="v3_1" style="top:317.94px;font-size:8.0px;line-height:8.0px;color:#367b9a;font-weight:400;font-family:'Liberation Sans', sans-serif;right:739.2px;transform-origin:100% 50%;transform:scaleX(0.9525);">0.00</div>
<div class="t" id="v3_2" style="top:317.94px;font-size:8.0px;line-height:8.0px;color:#367b9a;font-weight:400;font-family:'Liberation Sans', sans-serif;right:667.2px;transform-origin:100% 50%;transform:scaleX(0.9525);">0.00</div>
<div class="t" id="v3_3" style="top:317.94px;font-size:8.0px;line-height:8.0px;color:#367b9a;font-weight:400;font-family:'Liberation Sans', sans-serif;right:595.8px;transform-origin:100% 50%;transform:scaleX(0.9525);">0.00</div>
<div class="t" id="v3_4" style="top:317.94px;font-size:8.0px;line-height:8.0px;color:#367b9a;font-weight:400;font-family:'Liberation Sans', sans-serif;right:524.5px;transform-origin:100% 50%;transform:scaleX(0.9525);">0.00</div>
<div class="t" id="v3_5" style="top:317.94px;font-size:8.0px;line-height:8.0px;color:#367b9a;font-weight:400;font-family:'Liberation Sans', sans-serif;right:452.20000000000005px;transform-origin:100% 50%;transform:scaleX(0.9525);">0.00</div>
<div class="t" id="rn4" style="top:333.31px;font-size:8.0px;line-height:8.0px;color:#555;font-weight:400;font-family:'Liberation Sans', sans-serif;right:1067.7px;transform-origin:100% 50%;">5</div>
<div class="t" id="code4" style="top:333.31px;font-size:8.0px;line-height:8.0px;color:#367b9a;font-weight:400;font-family:'Liberation Sans', sans-serif;left:232.5px;transform-origin:0 50%;transform:scaleX(0.9405);">10000.2023</div>
<div class="t" id="name4" style="top:333.31px;font-size:8.0px;line-height:8.0px;color:#555;font-weight:400;font-family:'Liberation Sans', sans-serif;left:312.0px;transform-origin:0 50%;transform:scaleX(0.9058);">General Fund 2023</div>
<div class="t" id="v4_0" style="top:333.31px;font-size:8.0px;line-height:8.0px;color:#367b9a;font-weight:400;font-family:'Liberation Sans', sans-serif;right:812.0px;transform-origin:100% 50%;transform:scaleX(0.9525);">0.00</div>
<div class="t" id="v4_1" style="top:333.31px;font-size:8.0px;line-height:8.0px;color:#367b9a;font-weight:400;font-family:'Liberation Sans', sans-serif;right:739.2px;transform-origin:100% 50%;transform:scaleX(0.9525);">0.00</div>
<div class="t" id="v4_2" style="top:333.31px;font-size:8.0px;line-height:8.0px;color:#367b9a;font-weight:400;font-family:'Liberation Sans', sans-serif;right:667.2px;transform-origin:100% 50%;transform:scaleX(0.9525);">0.00</div>
<div class="t" id="v4_3" style="top:333.31px;font-size:8.0px;line-height:8.0px;color:#367b9a;font-weight:400;font-family:'Liberation Sans', sans-serif;right:595.8px;transform-origin:100% 50%;transform:scaleX(0.9525);">0.00</div>
<div class="t" id="v4_4" style="top:333.31px;font-size:8.0px;line-height:8.0px;color:#367b9a;font-weight:400;font-family:'Liberation Sans', sans-serif;right:524.5px;transform-origin:100% 50%;transform:scaleX(0.9525);">0.00</div>
<div class="t" id="v4_5" style="top:333.31px;font-size:8.0px;line-height:8.0px;color:#367b9a;font-weight:400;font-family:'Liberation Sans', sans-serif;right:452.20000000000005px;transform-origin:100% 50%;transform:scaleX(0.9525);">0.00</div>
<div class="t" id="rn5" style="top:348.68px;font-size:8.0px;line-height:8.0px;color:#555;font-weight:400;font-family:'Liberation Sans', sans-serif;right:1067.7px;transform-origin:100% 50%;">6</div>
<div class="t" id="code5" style="top:348.68px;font-size:8.0px;line-height:8.0px;color:#367b9a;font-weight:400;font-family:'Liberation Sans', sans-serif;left:232.5px;transform-origin:0 50%;transform:scaleX(0.9405);">10000.2024</div>
<div class="t" id="name5" style="top:348.68px;font-size:8.0px;line-height:8.0px;color:#555;font-weight:400;font-family:'Liberation Sans', sans-serif;left:312.0px;transform-origin:0 50%;transform:scaleX(0.9058);">General Fund 2024</div>
<div class="t" id="v5_0" style="top:348.68px;font-size:8.0px;line-height:8.0px;color:#367b9a;font-weight:400;font-family:'Liberation Sans', sans-serif;right:812.0px;transform-origin:100% 50%;transform:scaleX(0.9525);">500,000.00</div>
<div class="t" id="v5_1" style="top:348.68px;font-size:8.0px;line-height:8.0px;color:#367b9a;font-weight:400;font-family:'Liberation Sans', sans-serif;right:739.2px;transform-origin:100% 50%;transform:scaleX(0.9525);">0.00</div>
<div class="t" id="v5_2" style="top:348.68px;font-size:8.0px;line-height:8.0px;color:#367b9a;font-weight:400;font-family:'Liberation Sans', sans-serif;right:667.2px;transform-origin:100% 50%;transform:scaleX(0.9525);">25,000.00</div>
<div class="t" id="v5_3" style="top:348.68px;font-size:8.0px;line-height:8.0px;color:#367b9a;font-weight:400;font-family:'Liberation Sans', sans-serif;right:595.8px;transform-origin:100% 50%;transform:scaleX(0.9525);">25,000.00</div>
<div class="t" id="v5_4" style="top:348.68px;font-size:8.0px;line-height:8.0px;color:#367b9a;font-weight:400;font-family:'Liberation Sans', sans-serif;right:524.5px;transform-origin:100% 50%;transform:scaleX(0.9525);">475,000.00</div>
<div class="t" id="v5_5" style="top:348.68px;font-size:8.0px;line-height:8.0px;color:#367b9a;font-weight:400;font-family:'Liberation Sans', sans-serif;right:452.20000000000005px;transform-origin:100% 50%;transform:scaleX(0.9525);">0.00</div>
<div class="t" id="rn6" style="top:364.05px;font-size:8.0px;line-height:8.0px;color:#555;font-weight:400;font-family:'Liberation Sans', sans-serif;right:1067.7px;transform-origin:100% 50%;">7</div>
<div class="t" id="code6" style="top:364.05px;font-size:8.0px;line-height:8.0px;color:#367b9a;font-weight:400;font-family:'Liberation Sans', sans-serif;left:232.5px;transform-origin:0 50%;transform:scaleX(0.9405);">10000.2025</div>
<div class="t" id="name6" style="top:364.05px;font-size:8.0px;line-height:8.0px;color:#555;font-weight:400;font-family:'Liberation Sans', sans-serif;left:312.0px;transform-origin:0 50%;transform:scaleX(0.9058);">General Fund 2025</div>
<div class="t" id="v6_0" style="top:364.05px;font-size:8.0px;line-height:8.0px;color:#367b9a;font-weight:400;font-family:'Liberation Sans', sans-serif;right:812.0px;transform-origin:100% 50%;transform:scaleX(0.9525);">0.00</div>
<div class="t" id="v6_1" style="top:364.05px;font-size:8.0px;line-height:8.0px;color:#367b9a;font-weight:400;font-family:'Liberation Sans', sans-serif;right:739.2px;transform-origin:100% 50%;transform:scaleX(0.9525);">0.00</div>
<div class="t" id="v6_2" style="top:364.05px;font-size:8.0px;line-height:8.0px;color:#367b9a;font-weight:400;font-family:'Liberation Sans', sans-serif;right:667.2px;transform-origin:100% 50%;transform:scaleX(0.9525);">0.00</div>
<div class="t" id="v6_3" style="top:364.05px;font-size:8.0px;line-height:8.0px;color:#367b9a;font-weight:400;font-family:'Liberation Sans', sans-serif;right:595.8px;transform-origin:100% 50%;transform:scaleX(0.9525);">0.00</div>
<div class="t" id="v6_4" style="top:364.05px;font-size:8.0px;line-height:8.0px;color:#367b9a;font-weight:400;font-family:'Liberation Sans', sans-serif;right:524.5px;transform-origin:100% 50%;transform:scaleX(0.9525);">0.00</div>
<div class="t" id="v6_5" style="top:364.05px;font-size:8.0px;line-height:8.0px;color:#367b9a;font-weight:400;font-family:'Liberation Sans', sans-serif;right:452.20000000000005px;transform-origin:100% 50%;transform:scaleX(0.9525);">0.00</div>
<div class="t" id="rn7" style="top:379.42px;font-size:8.0px;line-height:8.0px;color:#555;font-weight:400;font-family:'Liberation Sans', sans-serif;right:1067.7px;transform-origin:100% 50%;">8</div>
<div class="t" id="code7" style="top:379.42px;font-size:8.0px;line-height:8.0px;color:#367b9a;font-weight:400;font-family:'Liberation Sans', sans-serif;left:232.5px;transform-origin:0 50%;transform:scaleX(0.9405);">20000.2021</div>
<div class="t" id="name7" style="top:379.42px;font-size:8.0px;line-height:8.0px;color:#555;font-weight:400;font-family:'Liberation Sans', sans-serif;left:312.0px;transform-origin:0 50%;transform:scaleX(0.9058);">Sponsored Federal Fun...</div>
<div class="t" id="v7_0" style="top:379.42px;font-size:8.0px;line-height:8.0px;color:#367b9a;font-weight:400;font-family:'Liberation Sans', sans-serif;right:812.0px;transform-origin:100% 50%;transform:scaleX(0.9525);">0.00</div>
<div class="t" id="v7_1" style="top:379.42px;font-size:8.0px;line-height:8.0px;color:#367b9a;font-weight:400;font-family:'Liberation Sans', sans-serif;right:739.2px;transform-origin:100% 50%;transform:scaleX(0.9525);">0.00</div>
<div class="t" id="v7_2" style="top:379.42px;font-size:8.0px;line-height:8.0px;color:#367b9a;font-weight:400;font-family:'Liberation Sans', sans-serif;right:667.2px;transform-origin:100% 50%;transform:scaleX(0.9525);">0.00</div>
<div class="t" id="v7_3" style="top:379.42px;font-size:8.0px;line-height:8.0px;color:#367b9a;font-weight:400;font-family:'Liberation Sans', sans-serif;right:595.8px;transform-origin:100% 50%;transform:scaleX(0.9525);">0.00</div>
<div class="t" id="v7_4" style="top:379.42px;font-size:8.0px;line-height:8.0px;color:#367b9a;font-weight:400;font-family:'Liberation Sans', sans-serif;right:524.5px;transform-origin:100% 50%;transform:scaleX(0.9525);">0.00</div>
<div class="t" id="v7_5" style="top:379.42px;font-size:8.0px;line-height:8.0px;color:#367b9a;font-weight:400;font-family:'Liberation Sans', sans-serif;right:452.20000000000005px;transform-origin:100% 50%;transform:scaleX(0.9525);">0.00</div>
<div class="t" id="rn8" style="top:394.79px;font-size:8.0px;line-height:8.0px;color:#555;font-weight:400;font-family:'Liberation Sans', sans-serif;right:1067.7px;transform-origin:100% 50%;">9</div>
<div class="t" id="code8" style="top:394.79px;font-size:8.0px;line-height:8.0px;color:#367b9a;font-weight:400;font-family:'Liberation Sans', sans-serif;left:232.5px;transform-origin:0 50%;transform:scaleX(0.9405);">20000.2022</div>
<div class="t" id="name8" style="top:394.79px;font-size:8.0px;line-height:8.0px;color:#555;font-weight:400;font-family:'Liberation Sans', sans-serif;left:312.0px;transform-origin:0 50%;transform:scaleX(0.9058);">Sponsored Federal Fun...</div>
<div class="t" id="v8_0" style="top:394.79px;font-size:8.0px;line-height:8.0px;color:#367b9a;font-weight:400;font-family:'Liberation Sans', sans-serif;right:812.0px;transform-origin:100% 50%;transform:scaleX(0.9525);">0.00</div>
<div class="t" id="v8_1" style="top:394.79px;font-size:8.0px;line-height:8.0px;color:#367b9a;font-weight:400;font-family:'Liberation Sans', sans-serif;right:739.2px;transform-origin:100% 50%;transform:scaleX(0.9525);">0.00</div>
<div class="t" id="v8_2" style="top:394.79px;font-size:8.0px;line-height:8.0px;color:#367b9a;font-weight:400;font-family:'Liberation Sans', sans-serif;right:667.2px;transform-origin:100% 50%;transform:scaleX(0.9525);">0.00</div>
<div class="t" id="v8_3" style="top:394.79px;font-size:8.0px;line-height:8.0px;color:#367b9a;font-weight:400;font-family:'Liberation Sans', sans-serif;right:595.8px;transform-origin:100% 50%;transform:scaleX(0.9525);">0.00</div>
<div class="t" id="v8_4" style="top:394.79px;font-size:8.0px;line-height:8.0px;color:#367b9a;font-weight:400;font-family:'Liberation Sans', sans-serif;right:524.5px;transform-origin:100% 50%;transform:scaleX(0.9525);">0.00</div>
<div class="t" id="v8_5" style="top:394.79px;font-size:8.0px;line-height:8.0px;color:#367b9a;font-weight:400;font-family:'Liberation Sans', sans-serif;right:452.20000000000005px;transform-origin:100% 50%;transform:scaleX(0.9525);">0.00</div>
<div class="a" style="left:218.5px;top:238.8px;width:1px;height:178.7px;background:#c9c9ce;"></div>
<div class="a" style="left:399.0px;top:238.8px;width:1.2px;height:178.7px;background:#a9a9b1;"></div>
<div class="a" style="left:188.4px;top:401.6px;width:1010.6px;height:1.7px;background:#6d6d6d;"></div>
<div class="a" style="left:188.4px;top:403.3px;width:642.4px;height:14.2px;background:#fcf6cb;"></div>
<div class="a" style="left:308.8px;top:403.3px;width:1px;height:14.199999999999989px;background:#ece6c0;"></div>
<div class="a" style="left:470.5px;top:403.3px;width:1px;height:14.199999999999989px;background:#ece6c0;"></div>
<div class="a" style="left:543.3px;top:403.3px;width:1px;height:14.199999999999989px;background:#ece6c0;"></div>
<div class="a" style="left:615.3px;top:403.3px;width:1px;height:14.199999999999989px;background:#ece6c0;"></div>
<div class="a" style="left:686.7px;top:403.3px;width:1px;height:14.199999999999989px;background:#ece6c0;"></div>
<div class="a" style="left:758.0px;top:403.3px;width:1px;height:14.199999999999989px;background:#ece6c0;"></div>
<div class="a" style="left:830.3px;top:403.3px;width:1px;height:14.199999999999989px;background:#ece6c0;"></div>
<div class="a" style="left:218.5px;top:403.3px;width:1px;height:14.199999999999989px;background:#b9b9b0;"></div>
<div class="a" style="left:399.0px;top:403.3px;width:1.2px;height:14.199999999999989px;background:#a9a9a1;"></div>
<div class="a" style="left:188.4px;top:417.5px;width:1010.6px;height:1px;background:#e6e6e6;"></div>
<div class="t" id="tot" style="top:406.43px;font-size:8.0px;line-height:8.0px;color:#333;font-weight:700;font-family:'Liberation Sans', sans-serif;left:231.9px;transform-origin:0 50%;transform:scaleX(0.8684);">Total</div>
<div class="t" id="tv0" style="top:406.63px;font-size:8.0px;line-height:8.0px;color:#3c3c3c;font-weight:400;font-family:'Liberation Sans', sans-serif;right:812.0px;transform-origin:100% 50%;transform:scaleX(0.9525);">2,700,000.00</div>
<div class="t" id="tv1" style="top:406.63px;font-size:8.0px;line-height:8.0px;color:#3c3c3c;font-weight:400;font-family:'Liberation Sans', sans-serif;right:739.2px;transform-origin:100% 50%;transform:scaleX(0.9525);">0.00</div>
<div class="t" id="tv2" style="top:406.63px;font-size:8.0px;line-height:8.0px;color:#3c3c3c;font-weight:400;font-family:'Liberation Sans', sans-serif;right:667.2px;transform-origin:100% 50%;transform:scaleX(0.9525);">425,000.00</div>
<div class="t" id="tv3" style="top:406.63px;font-size:8.0px;line-height:8.0px;color:#3c3c3c;font-weight:400;font-family:'Liberation Sans', sans-serif;right:595.8px;transform-origin:100% 50%;transform:scaleX(0.9525);">425,000.00</div>
<div class="t" id="tv4" style="top:406.63px;font-size:8.0px;line-height:8.0px;color:#3c3c3c;font-weight:400;font-family:'Liberation Sans', sans-serif;right:524.5px;transform-origin:100% 50%;transform:scaleX(0.9525);">2,275,000.00</div>
<div class="t" id="tv5" style="top:406.63px;font-size:8.0px;line-height:8.0px;color:#3c3c3c;font-weight:400;font-family:'Liberation Sans', sans-serif;right:452.20000000000005px;transform-origin:100% 50%;transform:scaleX(0.9525);">0.00</div>
<div class="a" style="left:1200px;top:269.2px;width:5.3px;height:44.8px;background:#9c9c9c;border-radius:3px;"></div>
<div class="t" id="tot24" style="top:422.95px;font-size:8.8px;line-height:8.8px;color:#333;font-weight:700;font-family:'Liberation Sans', sans-serif;left:188.9px;transform-origin:0 50%;transform:scaleX(0.9333);">Total: 24</div>
<div class="a" style="left:181.7px;top:439.0px;width:1026.8px;height:1px;background:#dcdcdc;"></div>
<div class="a" style="left:689.7px;top:438.2px;width:2.6px;height:2.6px;background:#333;border-radius:50%;"></div>
<div class="a" style="left:693.5px;top:438.2px;width:2.6px;height:2.6px;background:#333;border-radius:50%;"></div>
<div class="a" style="left:697.2px;top:438.2px;width:2.6px;height:2.6px;background:#333;border-radius:50%;"></div>
<div class="t" id="tab0" style="top:454.65px;font-size:8.8px;line-height:8.8px;color:#333;font-weight:700;font-family:'Liberation Sans', sans-serif;left:188.9px;transform-origin:0 50%;transform:scaleX(0.9315);">Transactions</div>
<div class="t" id="tab1" style="top:454.65px;font-size:8.8px;line-height:8.8px;color:#5e5e5e;font-weight:400;font-family:'Liberation Sans', sans-serif;left:256.7px;transform-origin:0 50%;transform:scaleX(0.9844);-webkit-text-stroke:0.15px #5e5e5e;">Cell Details</div>
<div class="t" id="tab2" style="top:454.65px;font-size:8.8px;line-height:8.8px;color:#5e5e5e;font-weight:400;font-family:'Liberation Sans', sans-serif;left:318.25px;transform-origin:0 50%;transform:scaleX(1.0306);-webkit-text-stroke:0.15px #5e5e5e;">Attachments</div>
<div class="t" id="tab3" style="top:454.65px;font-size:8.8px;line-height:8.8px;color:#5e5e5e;font-weight:400;font-family:'Liberation Sans', sans-serif;left:386.25px;transform-origin:0 50%;transform:scaleX(1.0109);-webkit-text-stroke:0.15px #5e5e5e;">Notes</div>
<div class="t" id="tab4" style="top:454.65px;font-size:8.8px;line-height:8.8px;color:#5e5e5e;font-weight:400;font-family:'Liberation Sans', sans-serif;left:427.5px;transform-origin:0 50%;transform:scaleX(1.0473);-webkit-text-stroke:0.15px #5e5e5e;">Audit Log</div>
<div class="a" style="left:188px;top:475.4px;width:52px;height:1.3px;background:#5d6f55;"></div>
<svg class="a" style="left:1167px;top:454.5px;" width="13" height="12" viewBox="0 0 13 12"><path d="M1.5 4 V1.5 H4 M9 1.5 H11.5 V4 M11.5 8 V10.5 H9 M4 10.5 H1.5 V8" fill="none" stroke="#333" stroke-width="1.4"/></svg>
<svg class="a" style="left:1186px;top:455px;" width="12" height="11" viewBox="0 0 12 11"><rect x="1" y="1.2" width="3" height="8.6" fill="none" stroke="#333" stroke-width="1.1"/><rect x="5.3" y="1.2" width="3" height="8.6" fill="none" stroke="#333" stroke-width="1.1"/><path d="M10.5 0.8 V10.4" stroke="#333" stroke-width="1.2"/></svg>
<div class="a" style="left:197px;top:477px;width:1003.4px;height:19.5px;background:#f3f2f0;"></div>
<svg class="a" style="left:199.5px;top:481.5px;" width="12" height="12" viewBox="0 0 12 12"><path d="M0.8 1.5 H10.3 M0.8 4 H10.3 M0.8 6.6 H4.6 M0.8 9.2 H3.8" stroke="#444" stroke-width="1"/><circle cx="7.4" cy="7.7" r="1.7" fill="none" stroke="#444" stroke-width="1"/><path d="M8.6 8.9 L10.3 10.6" stroke="#444" stroke-width="1.1"/></svg>
<div class="a" style="left:201.5px;top:512.8px;width:998.9000000000001px;height:1px;background:#d6d6d6;"></div>
<div class="a" style="left:201.5px;top:513.3px;width:392.20000000000005px;height:46.29px;background:#f2f2f2;"></div>
<div class="a" style="left:201.5px;top:529px;width:998.9000000000001px;height:1px;background:#e6e6e6;"></div>
<div class="a" style="left:201.5px;top:544px;width:998.9000000000001px;height:1px;background:#e6e6e6;"></div>
<div class="a" style="left:201.5px;top:560px;width:998.9000000000001px;height:1px;background:#e6e6e6;"></div>
<div class="a" style="left:286.0px;top:513.3px;width:1px;height:46.289999999999964px;background:#e4e4e4;"></div>
<div class="a" style="left:437.0px;top:513.3px;width:1px;height:46.289999999999964px;background:#e4e4e4;"></div>
<div class="a" style="left:514.9px;top:513.3px;width:1px;height:46.289999999999964px;background:#e4e4e4;"></div>
<div class="a" style="left:538.9px;top:513.3px;width:1px;height:46.289999999999964px;background:#e4e4e4;"></div>
<div class="a" style="left:593.2px;top:513.3px;width:1px;height:46.289999999999964px;background:#e4e4e4;"></div>
<div class="a" style="left:231.7px;top:496.5px;width:1px;height:134.5px;background:#c9c9ce;"></div>
<div class="t" id="bh_no" style="top:503.37px;font-size:7.95px;line-height:7.95px;color:#2b2b2b;font-weight:700;font-family:'Liberation Sans', sans-serif;left:235.5px;transform-origin:0 50%;transform:scaleX(0.9091);">No</div>
<svg class="a" style="left:275px;top:506px;" width="9" height="6" viewBox="0 0 9 6"><path d="M0.8 0.8 H7.6 L4.2 4.6 Z" fill="#2c72a8"/></svg>
<div class="t" id="bh_title" style="top:503.37px;font-size:7.95px;line-height:7.95px;color:#2b2b2b;font-weight:700;font-family:'Liberation Sans', sans-serif;left:289.5px;transform-origin:0 50%;transform:scaleX(0.9531);">Title</div>
<div class="t" id="bh_item" style="top:503.37px;font-size:7.95px;line-height:7.95px;color:#2b2b2b;font-weight:700;font-family:'Liberation Sans', sans-serif;left:440.6px;transform-origin:0 50%;transform:scaleX(0.9097);">Item Description</div>
<div class="t" id="bh_s" style="top:503.37px;font-size:7.95px;line-height:7.95px;color:#2b2b2b;font-weight:700;font-family:'Liberation Sans', sans-serif;left:518.0px;transform-origin:0 50%;transform:scaleX(0.9417);">S...</div>
<div class="t" id="bh_amt" style="top:503.37px;font-size:7.95px;line-height:7.95px;color:#2b2b2b;font-weight:700;font-family:'Liberation Sans', sans-serif;left:553.2px;transform-origin:0 50%;transform:scaleX(0.9167);">Amount</div>
<div class="t" id="brn0" style="top:517.63px;font-size:8.0px;line-height:8.0px;color:#555;font-weight:400;font-family:'Liberation Sans', sans-serif;right:1055.0px;transform-origin:100% 50%;">1</div>
<div class="t" id="bno0" style="top:517.63px;font-size:8.0px;line-height:8.0px;color:#555;font-weight:400;font-family:'Liberation Sans', sans-serif;left:236.3px;transform-origin:0 50%;transform:scaleX(0.9525);">1121</div>
<div class="t" id="btitle0" style="top:517.63px;font-size:8.0px;line-height:8.0px;color:#555;font-weight:400;font-family:'Liberation Sans', sans-serif;left:293.0px;transform-origin:0 50%;transform:scaleX(0.9160);">Nashville to Lebanon 345kv Transmissio...</div>
<div class="t" id="bamt0" style="top:517.63px;font-size:8.0px;line-height:8.0px;color:#555;font-weight:400;font-family:'Liberation Sans', sans-serif;right:690.5px;transform-origin:100% 50%;transform:scaleX(0.9525);">0.00</div>
<div class="t" id="brn1" style="top:533.06px;font-size:8.0px;line-height:8.0px;color:#555;font-weight:400;font-family:'Liberation Sans', sans-serif;right:1055.0px;transform-origin:100% 50%;">2</div>
<div class="t" id="bno1" style="top:533.06px;font-size:8.0px;line-height:8.0px;color:#555;font-weight:400;font-family:'Liberation Sans', sans-serif;left:236.3px;transform-origin:0 50%;transform:scaleX(0.9525);">1121</div>
<div class="t" id="btitle1" style="top:533.06px;font-size:8.0px;line-height:8.0px;color:#555;font-weight:400;font-family:'Liberation Sans', sans-serif;left:293.0px;transform-origin:0 50%;transform:scaleX(0.9160);">Nashville to Lebanon 345kv Transmissio...</div>
<div class="t" id="bamt1" style="top:533.06px;font-size:8.0px;line-height:8.0px;color:#555;font-weight:400;font-family:'Liberation Sans', sans-serif;right:690.5px;transform-origin:100% 50%;transform:scaleX(0.9525);">25,000.00</div>
<div class="t" id="brn2" style="top:548.49px;font-size:8.0px;line-height:8.0px;color:#555;font-weight:400;font-family:'Liberation Sans', sans-serif;right:1055.0px;transform-origin:100% 50%;">3</div>
<div class="t" id="btitle2" style="top:548.49px;font-size:8.0px;line-height:8.0px;color:#555;font-weight:400;font-family:'Liberation Sans', sans-serif;left:293.0px;transform-origin:0 50%;transform:scaleX(0.9058);">Manual Entry</div>
<div class="t" id="bdesc" style="top:548.49px;font-size:8.0px;line-height:8.0px;color:#555;font-weight:400;font-family:'Liberation Sans', sans-serif;left:443.7px;transform-origin:0 50%;transform:scaleX(0.9029);">Senate Bill Funding</div>
<div class="t" id="bamt2" style="top:548.49px;font-size:8.0px;line-height:8.0px;color:#555;font-weight:400;font-family:'Liberation Sans', sans-serif;right:690.5px;transform-origin:100% 50%;transform:scaleX(0.9525);">500,000.00</div>
<div class="a" style="left:201.5px;top:614px;width:998.9000000000001px;height:2px;background:#777;"></div>
<div class="a" style="left:201.5px;top:616px;width:392.20000000000005px;height:15px;background:#fcf6cb;"></div>
<div class="a" style="left:286.0px;top:616px;width:1px;height:15px;background:#ece6c0;"></div>
<div class="a" style="left:437.0px;top:616px;width:1px;height:15px;background:#ece6c0;"></div>
<div class="a" style="left:514.9px;top:616px;width:1px;height:15px;background:#ece6c0;"></div>
<div class="a" style="left:538.9px;top:616px;width:1px;height:15px;background:#ece6c0;"></div>
<div class="a" style="left:593.2px;top:616px;width:1px;height:15px;background:#ece6c0;"></div>
<div class="a" style="left:231.7px;top:616px;width:1px;height:15px;background:#b9b9b0;"></div>
<div class="a" style="left:201.5px;top:631px;width:998.9000000000001px;height:1px;background:#e6e6e6;"></div>
<div class="t" id="btot" style="top:619.33px;font-size:8.0px;line-height:8.0px;color:#444;font-weight:700;font-family:'Liberation Sans', sans-serif;left:444.0px;transform-origin:0 50%;transform:scaleX(0.9020);">Total Amount</div>
<div class="t" id="btotv" style="top:619.33px;font-size:8.0px;line-height:8.0px;color:#444;font-weight:400;font-family:'Liberation Sans', sans-serif;right:690.6px;transform-origin:100% 50%;transform:scaleX(0.9525);">525,000.00</div>
<div class="t" id="tot3" style="top:635.36px;font-size:7.84px;line-height:7.84px;color:#333;font-weight:700;font-family:'Liberation Sans', sans-serif;left:201.0px;transform-origin:0 50%;transform:scaleX(0.8889);">Total: 3</div>
</div></body></html>
